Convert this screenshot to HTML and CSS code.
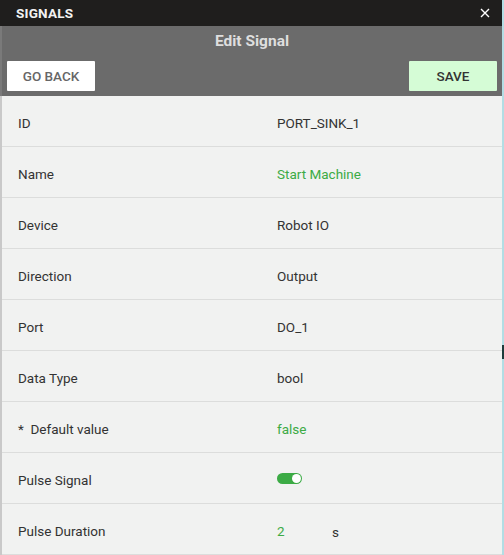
FILE: index.html
```html
<!DOCTYPE html>
<html>
<head>
<meta charset="utf-8">
<link rel="stylesheet" href="styles.css">
</head>
<body>
<div class="scene">
  <div class="edge-left"></div>
  <div class="panel">
    <div class="titlebar">
      <span class="title">SIGNALS</span>
      <svg class="close" width="10" height="10" viewBox="0 0 10 10"><path d="M1 1L9 9M9 1L1 9" stroke="#fff" stroke-width="1.4"/></svg>
    </div>
    <div class="toolbar">
      <div class="heading">Edit Signal</div>
      <div class="actions">
        <button class="btn back">GO BACK</button>
        <button class="btn save">SAVE</button>
      </div>
    </div>
    <div class="rows">
      <div class="row"><span class="label">ID</span><span class="value">PORT_SINK_1</span></div>
      <div class="row"><span class="label">Name</span><span class="value green">Start Machine</span></div>
      <div class="row"><span class="label">Device</span><span class="value">Robot IO</span></div>
      <div class="row"><span class="label">Direction</span><span class="value">Output</span></div>
      <div class="row"><span class="label">Port</span><span class="value">DO_1</span></div>
      <div class="row"><span class="label">Data Type</span><span class="value">bool</span></div>
      <div class="row"><span class="label">*&nbsp; Default value</span><span class="value green">false</span></div>
      <div class="row"><span class="label">Pulse Signal</span><span class="value"><span class="toggle"><span class="knob"></span></span></span></div>
      <div class="row"><span class="label">Pulse Duration</span><span class="value"><span class="green num">2</span><span class="unit">s</span></span></div>
    </div>
  </div>
  <div class="edge-right"><div class="blip"></div></div>
</div>
</body>
</html>
```
FILE: styles.css
```css
html, body {
  margin: 0;
  padding: 0;
  width: 504px;
  height: 555px;
  overflow: hidden;
  font-family: Roboto, "Noto Sans", sans-serif;
}
.scene {
  display: flex;
  height: 555px;
}
.edge-left {
  width: 2px;
  background: linear-gradient(#1f1e1d 0 26px, #7a7a7a 26px 96px, #c9c9c9 96px);
}
.edge-right {
  width: 2px;
  background: #b3dde4;
  display: flex;
  flex-direction: column;
  padding-top: 345px;
}
.blip {
  height: 14px;
  background: #1e3c3c;
}
.panel {
  width: 500px;
  display: flex;
  flex-direction: column;
  background: #f1f2f1;
  overflow: hidden;
}
.titlebar {
  flex-shrink: 0;
  height: 26px;
  box-sizing: border-box;
  background: #1f1e1d;
  display: flex;
  align-items: center;
  justify-content: space-between;
  padding: 0 12px 0 14px;
}
.title {
  color: #f2f2f2;
  font-weight: 700;
  font-size: 13.5px;
  letter-spacing: 0.2px;
}
.close {
  display: block;
}
.toolbar {
  flex-shrink: 0;
  height: 70px;
  background: #6b6b6b;
  display: flex;
  flex-direction: column;
}
.heading {
  text-align: center;
  color: #dedede;
  font-weight: 700;
  font-size: 15.5px;
  padding-top: 6px;
  height: 29px;
  box-sizing: border-box;
  margin-bottom: 6px;
}
.actions {
  display: flex;
  justify-content: space-between;
  padding: 0 5px;
}
.btn {
  width: 88px;
  height: 30px;
  border: none;
  border-radius: 1px;
  font-family: Roboto, "Noto Sans", sans-serif;
  font-size: 13.5px;
  font-weight: 500;
  padding: 0;
}
.back {
  background: #ffffff;
  color: #666;
}
.save {
  background: #d5fcd6;
  color: #333;
}
.rows {
  flex-shrink: 0;
  display: flex;
  flex-direction: column;
}
.row {
  flex-shrink: 0;
  height: 51px;
  box-sizing: border-box;
  border-bottom: 1px solid #dcdddc;
  display: flex;
  align-items: center;
  font-size: 13.5px;
  color: #333;
  padding-top: 4px;
}
.label {
  width: 259px;
  padding-left: 16px;
}
.value {
  display: flex;
  align-items: center;
}
.green {
  color: #3cab45;
}
.num {
  width: 55px;
}
.unit {
  padding-top: 2px;
}
.toggle {
  width: 25px;
  height: 11px;
  border-radius: 6px;
  background: #3cab45;
  display: flex;
  justify-content: flex-end;
  align-items: center;
  padding-right: 1px;
  box-sizing: border-box;
  margin-top: -4px;
}
.knob {
  width: 9px;
  height: 9px;
  border-radius: 50%;
  background: #fff;
}
```
